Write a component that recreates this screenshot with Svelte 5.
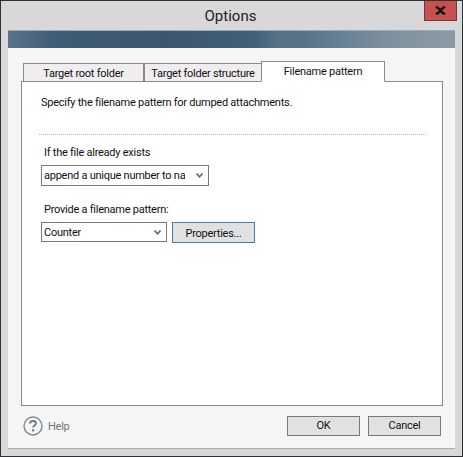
<script>
  const tabs = [
    { label: 'Target root folder', w: 120 },
    { label: 'Target folder structure', w: 118 },
    { label: 'Filename pattern', w: 124, active: true }
  ];
</script>

<div class="window">
  <div class="close" aria-label="Close">
    <svg width="11" height="9" viewBox="0 0 11 9"><path d="M1 0.5 L5.5 4 L10 0.5 M1 8.5 L5.5 5 L10 8.5" fill="none" stroke="#111" stroke-width="2.4"/></svg>
  </div>
  <div class="title">Options</div>
  <div class="client">
    <div class="banner"></div>
    <div class="body">
      <div class="tabs">
        {#each tabs as t}
          <div class="tab" class:active={t.active} style="width:{t.w}px">{t.label}</div>
        {/each}
      </div>
      <div class="panel">
        <p class="intro">Specify the filename pattern for dumped attachments.</p>
        <div class="rule"></div>
        <div class="label first">If the file already exists</div>
        <div class="select wide">
          <span>append a unique number to na</span>
          <svg width="7" height="5" viewBox="0 0 7 5"><path d="M0.5 0.5 L3.5 3.8 L6.5 0.5" fill="none" stroke="#666" stroke-width="1.6"/></svg>
        </div>
        <div class="label second">Provide a filename pattern:</div>
        <div class="row">
          <div class="select narrow">
            <span>Counter</span>
            <svg width="7" height="5" viewBox="0 0 7 5"><path d="M0.5 0.5 L3.5 3.8 L6.5 0.5" fill="none" stroke="#666" stroke-width="1.6"/></svg>
          </div>
          <div class="btn props">Properties...</div>
        </div>
      </div>
      <div class="footer">
        <div class="help">
          <svg width="20" height="20" viewBox="0 0 20 20">
            <circle cx="10" cy="10" r="9" fill="none" stroke="#7d8a96" stroke-width="1.4"/>
            <path d="M7 7.6 C7 5.8 8.4 5 10 5 C11.7 5 13 5.9 13 7.4 C13 9.2 10.2 9.4 10.2 11.6" fill="none" stroke="#6f7a85" stroke-width="1.9"/>
            <rect x="9.1" y="13.2" width="2.2" height="2.2" fill="#6f7a85"/>
          </svg>
          <span>Help</span>
        </div>
        <div class="actions">
          <div class="btn action">OK</div>
          <div class="btn action">Cancel</div>
        </div>
      </div>
    </div>
  </div>
</div>

<style>
  :global(body) { margin: 0; background: #d8d8d8; }
  .window {
    position: relative;
    box-sizing: border-box;
    width: 463px;
    height: 457px;
    border: 1px solid #2b3238;
    background: #d8d8d8;
    padding: 0 7px 7px;
    display: flex;
    flex-direction: column;
    font-family: "Roboto", "Liberation Sans", sans-serif;
    font-size: 11px;
    letter-spacing: -0.25px;
    color: #111;
    overflow: hidden;
  }
  .close {
    position: absolute;
    top: -1px;
    right: 5px;
    width: 33px;
    height: 21px;
    box-sizing: border-box;
    background: #c75050;
    border: 1px solid #6f3a3a;
    display: flex;
    align-items: center;
    justify-content: center;
  }
  .title {
    height: 29px;
    line-height: 30px;
    text-align: center;
    font-size: 15px;
    letter-spacing: 0;
    color: #222;
    flex: none;
    padding-right: 2px;
  }
  .client {
    flex: 1;
    display: flex;
    flex-direction: column;
    background: #f5f5f5;
    border-bottom: 1px solid #a9aeb2;
    min-height: 0;
  }
  .banner {
    height: 18px;
    flex: none;
    box-sizing: border-box;
    border-top: 1px solid #9aa9b8;
    background:
      linear-gradient(100deg, rgba(255,255,255,0) 55%, rgba(255,255,255,0.06) 60%, rgba(255,255,255,0) 66%),
      linear-gradient(90deg, #5a7389 0%, #3f5d78 10%, #3b566f 35%, #41607a 55%, #5d7a8f 70%, #7f919e 85%, #8c9aa5 100%);
  }
  .body {
    flex: 1;
    display: flex;
    flex-direction: column;
    padding: 13px 12px 0 13px;
    min-height: 0;
  }
  .tabs {
    display: flex;
    align-items: flex-end;
    height: 21px;
    padding-left: 2px;
    flex: none;
    position: relative;
    z-index: 1;
    margin-bottom: -1px;
  }
  .tab {
    box-sizing: border-box;
    height: 19px;
    background: #f0edf0;
    border: 1px solid #8a8a8a;
    border-right: 0;
    text-align: center;
    line-height: 19px;
    white-space: nowrap;
  }
  .tab:nth-child(2) { border-left-width: 2px; }
  .tab.active {
    height: 21px;
    background: #fff;
    border-right: 1px solid #8a8a8a;
    border-bottom: 1px solid #fff;
    line-height: 20px;
  }
  .panel {
    box-sizing: border-box;
    height: 325px;
    flex: none;
    background: #fff;
    border: 1px solid #8a8a8a;
    padding: 13px 16px 0 19px;
  }
  .intro { margin: 0; line-height: 16px; }
  .rule {
    margin-top: 23px;
    margin-left: -2px;
    border-top: 1px dotted #b8b8b8;
  }
  .label { margin-left: 3px; line-height: 16px; }
  .label.first { margin-top: 10px; }
  .label.second { margin-top: 16px; }
  .select {
    box-sizing: border-box;
    display: flex;
    align-items: center;
    justify-content: space-between;
    border: 1px solid #7a7a7a;
    background: #fff;
    padding: 0 5px 0 2px;
    white-space: nowrap;
  }
  .select span { overflow: hidden; }
  .wide { width: 168px; height: 21px; margin-top: 4px; }
  .narrow { width: 126px; height: 20px; }
  .row { display: flex; gap: 5px; margin-top: 4px; align-items: flex-start; }
  .btn {
    box-sizing: border-box;
    background: #e1e1e1;
    text-align: center;
  }
  .props {
    width: 83px;
    height: 21px;
    line-height: 21px;
    border: 1px solid #3c7fb1;
  }
  .footer {
    flex: 1;
    display: flex;
    justify-content: space-between;
    align-items: flex-start;
    padding: 10px 2px 0 2px;
  }
  .help {
    display: flex;
    align-items: center;
    gap: 5px;
    color: #6d7680;
  }
  .actions { display: flex; gap: 8px; }
  .action {
    width: 73px;
    height: 20px;
    line-height: 18px;
    border: 1px solid #7a7a7a;
  }
</style>
